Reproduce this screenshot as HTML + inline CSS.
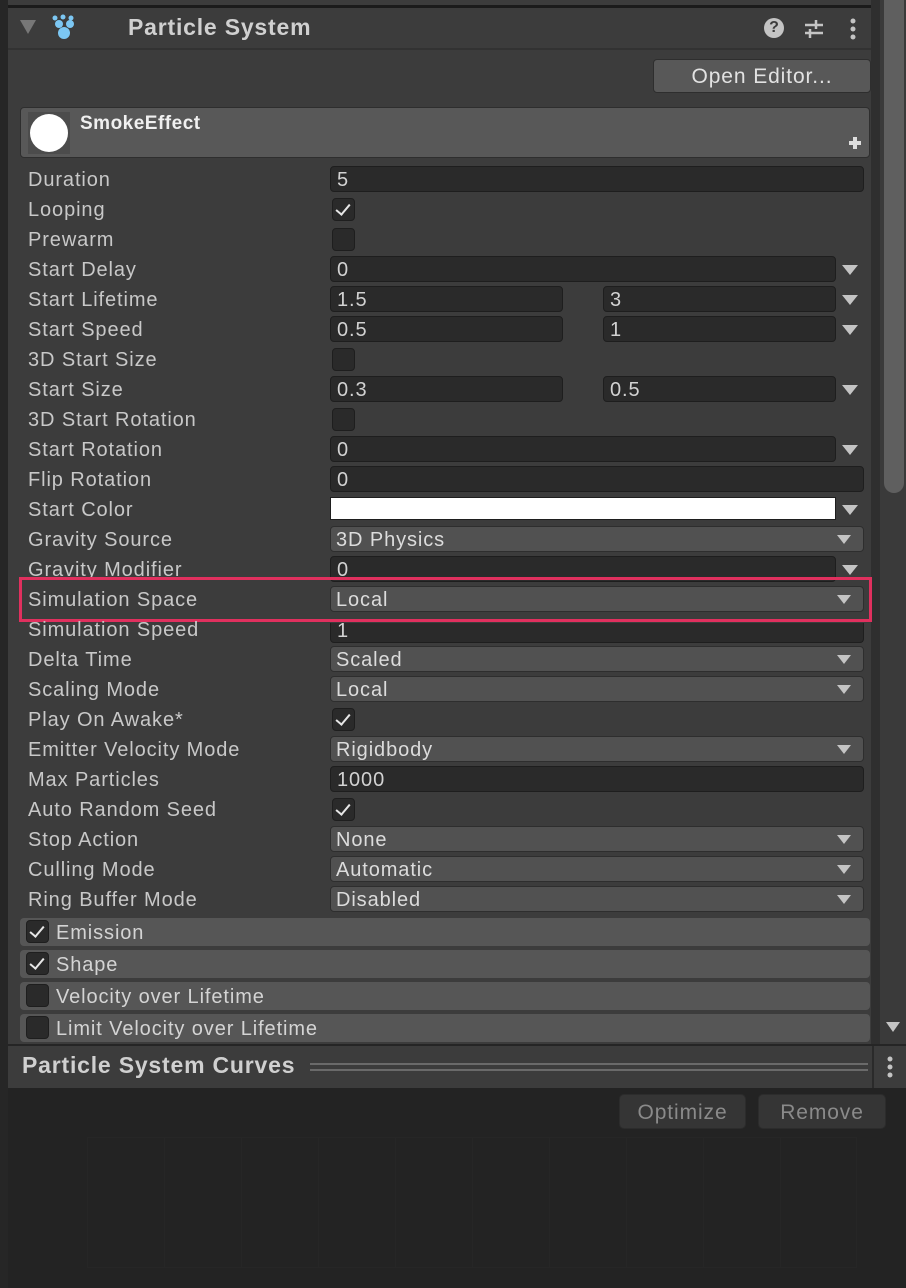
<!DOCTYPE html>
<html><head><meta charset="utf-8"><style>
*{margin:0;padding:0;box-sizing:border-box}
body{width:906px;height:1288px;background:#232323;position:relative;overflow:hidden;font-family:"Liberation Sans",sans-serif;color:#c8c8c8;font-size:20px;letter-spacing:0.9px}
.a{position:absolute}
.lbl{position:absolute;left:28px;line-height:32px;height:30px;white-space:nowrap}
.in{position:absolute;height:26px;background:#2a2a2a;border:1px solid #1e1e1e;border-radius:4px;padding-left:6px;line-height:27px;color:#d2d2d2}
.dd{position:absolute;height:26px;background:#515151;border:1px solid #2e2e2e;border-radius:4px;padding-left:5px;line-height:27px;color:#dcdcdc}
.dd::after{content:"";position:absolute;right:12px;top:8px;border-left:7px solid transparent;border-right:7px solid transparent;border-top:9px solid #c4c4c4}
.arr{position:absolute;left:842px;width:0;height:0;border-left:8px solid transparent;border-right:8px solid transparent;border-top:10px solid #c4c4c4}
.cb{position:absolute;width:23px;height:23px;background:#2a2a2a;border:1px solid #1e1e1e;border-radius:4px}
.ck::after{content:"";position:absolute;left:6px;top:2px;width:6px;height:12px;border-right:2px solid #e6e6e6;border-bottom:2px solid #e6e6e6;transform:rotate(40deg)}
.mod{position:absolute;left:20px;width:850px;height:28px;background:#565656;border-radius:4px;padding-left:36px;line-height:30px;color:#d4d4d4}
.mod .cb{left:6px;top:2px}
</style></head><body>
<div class="a" style="left:0;top:0;width:906px;height:1046px;background:#3c3c3c"></div>
<div class="a" style="left:0;top:0;width:8px;height:1046px;background:#262626"></div>
<div class="a" style="left:8px;top:5px;width:872px;height:3px;background:#1b1b1b"></div>
<div class="a" style="left:8px;top:48px;width:872px;height:2px;background:#323232"></div>
<div class="a" style="left:871px;top:0;width:9px;height:1046px;background:#2f2f2f"></div>
<div class="a" style="left:880px;top:0;width:26px;height:1046px;background:#3a3a3a"></div>
<div class="a" style="left:884px;top:0;width:20px;height:493px;background:#5f5f5f;border-radius:0 0 10px 10px"></div>
<div class="a" style="left:886px;top:1022px;border-left:7px solid transparent;border-right:7px solid transparent;border-top:10px solid #c4c4c4"></div>
<div class="a" style="left:20px;top:20px;border-left:8px solid transparent;border-right:8px solid transparent;border-top:14px solid #777"></div>
<svg class="a" style="left:50px;top:14px" width="30" height="28"><circle cx="5" cy="4" r="2.5" fill="#7cc7f3"/><circle cx="13" cy="3" r="2.5" fill="#7cc7f3"/><circle cx="21" cy="4" r="2.5" fill="#7cc7f3"/><circle cx="9" cy="10" r="4" fill="#7cc7f3"/><circle cx="20" cy="10" r="4" fill="#7cc7f3"/><circle cx="14" cy="19" r="6" fill="#7cc7f3"/></svg>
<div class="a" style="left:128px;top:14px;font-size:23px;letter-spacing:0.8px;font-weight:bold;color:#d0d0d0">Particle System</div>
<div class="a" style="left:764px;top:18px;width:20px;height:20px;border-radius:50%;background:#c4c4c4;color:#3c3c3c;font-weight:bold;font-size:16px;letter-spacing:0;text-align:center;line-height:20px">?</div>
<svg class="a" style="left:803px;top:18px" width="22" height="22"><path d="M2 7h18M2 15h18" stroke="#c4c4c4" stroke-width="2.5"/><path d="M13 2v9M7 11v9" stroke="#c4c4c4" stroke-width="2.5"/></svg>
<svg class="a" style="left:848px;top:17px" width="10" height="24"><circle cx="5" cy="4" r="2.5" fill="#c4c4c4"/><circle cx="5" cy="12" r="2.5" fill="#c4c4c4"/><circle cx="5" cy="20" r="2.5" fill="#c4c4c4"/></svg>
<div class="a" style="left:653px;top:59px;width:218px;height:34px;background:#585858;border:1px solid #2e2e2e;border-radius:4px;text-align:center;line-height:34px;font-size:21px;color:#e2e2e2">Open Editor...</div>
<div class="a" style="left:20px;top:107px;width:850px;height:51px;background:#585858;border:1px solid #2e2e2e;border-radius:4px"></div>
<div class="a" style="left:28px;top:112px;width:42px;height:42px;background:#4c4c4c"></div>
<div class="a" style="left:30px;top:114px;width:38px;height:38px;border-radius:50%;background:#fff"></div>
<div class="a" style="left:80px;top:113px;font-size:19px;letter-spacing:0.5px;font-weight:bold;color:#f0f0f0">SmokeEffect</div>
<div class="a" style="left:849px;top:141px;width:12px;height:4px;background:#ddd"></div>
<div class="a" style="left:853px;top:137px;width:4px;height:12px;background:#ddd"></div>

<div class="lbl" style="top:164px">Duration</div><div class="in" style="left:330px;top:166px;width:534px">5</div>
<div class="lbl" style="top:194px">Looping</div><div class="cb ck" style="left:332px;top:198px"></div>
<div class="lbl" style="top:224px">Prewarm</div><div class="cb" style="left:332px;top:228px"></div>
<div class="lbl" style="top:254px">Start Delay</div><div class="in" style="left:330px;top:256px;width:506px">0</div><div class="arr" style="top:265px"></div>
<div class="lbl" style="top:284px">Start Lifetime</div><div class="in" style="left:330px;top:286px;width:233px">1.5</div><div class="in" style="left:603px;top:286px;width:233px">3</div><div class="arr" style="top:295px"></div>
<div class="lbl" style="top:314px">Start Speed</div><div class="in" style="left:330px;top:316px;width:233px">0.5</div><div class="in" style="left:603px;top:316px;width:233px">1</div><div class="arr" style="top:325px"></div>
<div class="lbl" style="top:344px">3D Start Size</div><div class="cb" style="left:332px;top:348px"></div>
<div class="lbl" style="top:374px">Start Size</div><div class="in" style="left:330px;top:376px;width:233px">0.3</div><div class="in" style="left:603px;top:376px;width:233px">0.5</div><div class="arr" style="top:385px"></div>
<div class="lbl" style="top:404px">3D Start Rotation</div><div class="cb" style="left:332px;top:408px"></div>
<div class="lbl" style="top:434px">Start Rotation</div><div class="in" style="left:330px;top:436px;width:506px">0</div><div class="arr" style="top:445px"></div>
<div class="lbl" style="top:464px">Flip Rotation</div><div class="in" style="left:330px;top:466px;width:534px">0</div>
<div class="lbl" style="top:494px">Start Color</div><div class="a" style="left:330px;top:497px;width:506px;height:23px;background:#fff;border:1px solid #1e1e1e"></div><div class="arr" style="top:505px"></div>
<div class="lbl" style="top:524px">Gravity Source</div><div class="dd" style="left:330px;top:526px;width:534px">3D Physics</div>
<div class="lbl" style="top:554px">Gravity Modifier</div><div class="in" style="left:330px;top:556px;width:506px">0</div><div class="arr" style="top:565px"></div>
<div class="lbl" style="top:584px">Simulation Space</div><div class="dd" style="left:330px;top:586px;width:534px">Local</div>
<div class="a" style="left:19px;top:577px;width:853px;height:45px;border:3px solid #e0305e"></div>
<div class="lbl" style="top:614px">Simulation Speed</div><div class="in" style="left:330px;top:623px;width:534px;height:20px;line-height:17px;border-top:none;border-radius:0 0 4px 4px">1</div>
<div class="lbl" style="top:644px">Delta Time</div><div class="dd" style="left:330px;top:646px;width:534px">Scaled</div>
<div class="lbl" style="top:674px">Scaling Mode</div><div class="dd" style="left:330px;top:676px;width:534px">Local</div>
<div class="lbl" style="top:704px">Play On Awake*</div><div class="cb ck" style="left:332px;top:708px"></div>
<div class="lbl" style="top:734px">Emitter Velocity Mode</div><div class="dd" style="left:330px;top:736px;width:534px">Rigidbody</div>
<div class="lbl" style="top:764px">Max Particles</div><div class="in" style="left:330px;top:766px;width:534px">1000</div>
<div class="lbl" style="top:794px">Auto Random Seed</div><div class="cb ck" style="left:332px;top:798px"></div>
<div class="lbl" style="top:824px">Stop Action</div><div class="dd" style="left:330px;top:826px;width:534px">None</div>
<div class="lbl" style="top:854px">Culling Mode</div><div class="dd" style="left:330px;top:856px;width:534px">Automatic</div>
<div class="lbl" style="top:884px">Ring Buffer Mode</div><div class="dd" style="left:330px;top:886px;width:534px">Disabled</div>

<div class="mod" style="top:918px"><div class="cb ck"></div>Emission</div>
<div class="mod" style="top:950px"><div class="cb ck"></div>Shape</div>
<div class="mod" style="top:982px"><div class="cb"></div>Velocity over Lifetime</div>
<div class="mod" style="top:1014px"><div class="cb"></div>Limit Velocity over Lifetime</div>

<div class="a" style="left:8px;top:1044px;width:898px;height:44px;background:#3c3c3c;border-top:2px solid #252525"></div>
<div class="a" style="left:0;top:1044px;width:8px;height:244px;background:#262626"></div>
<div class="a" style="left:22px;top:1052px;font-size:23px;letter-spacing:0.8px;font-weight:bold;color:#d0d0d0">Particle System Curves</div>
<div class="a" style="left:310px;top:1063px;width:558px;height:2px;background:#6a6a6a"></div>
<div class="a" style="left:310px;top:1069px;width:558px;height:2px;background:#6a6a6a"></div>
<div class="a" style="left:872px;top:1046px;width:2px;height:42px;background:#2a2a2a"></div>
<svg class="a" style="left:885px;top:1055px" width="10" height="24"><circle cx="5" cy="4" r="2.5" fill="#c4c4c4"/><circle cx="5" cy="12" r="2.5" fill="#c4c4c4"/><circle cx="5" cy="20" r="2.5" fill="#c4c4c4"/></svg>
<div class="a" style="left:619px;top:1094px;width:127px;height:35px;background:#353535;border:1px solid #2c2c2c;border-radius:5px;text-align:center;line-height:35px;font-size:21px;color:#8a8a8a">Optimize</div>
<div class="a" style="left:758px;top:1094px;width:128px;height:35px;background:#353535;border:1px solid #2c2c2c;border-radius:5px;text-align:center;line-height:35px;font-size:21px;color:#8a8a8a">Remove</div>
<div class="a" style="left:87px;top:1137px;width:770px;height:131px;border:1px solid #262626;background:
repeating-linear-gradient(90deg,transparent 0 76px,#262626 76px 77px)"></div>
</body></html>
